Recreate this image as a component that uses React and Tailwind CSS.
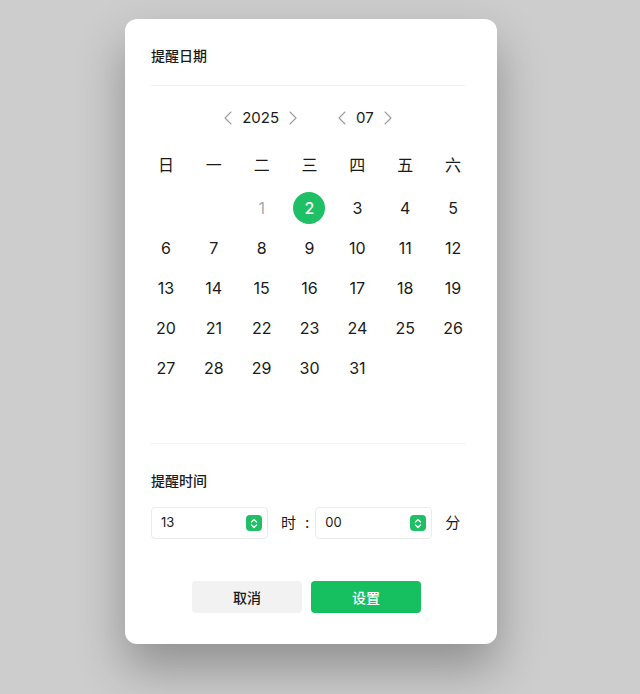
const weekdays = ["日", "一", "二", "三", "四", "五", "六"];

// 2025年7月 从周二开始
const days = [null, null, 1, 2, 3, 4, 5];
for (let d = 6; d <= 31; d++) days.push(d);

function Chevron({ dir }) {
  return (
    <svg width="8" height="14" viewBox="0 0 8 14" fill="none">
      <path
        d={dir === "left" ? "M7 1 L1 7 L7 13" : "M1 1 L7 7 L1 13"}
        stroke="#9c9c9c"
        strokeWidth="1.1"
        strokeLinecap="round"
        strokeLinejoin="round"
      />
    </svg>
  );
}

function Spinner() {
  return (
    <span className="flex h-4 w-4 items-center justify-center rounded-[4px] bg-[#1fbf66]">
      <svg width="8" height="11" viewBox="0 0 8 11" fill="none">
        <path d="M1.5 4 L4 1.5 L6.5 4" stroke="white" strokeWidth="1.3" strokeLinecap="round" strokeLinejoin="round" />
        <path d="M1.5 7 L4 9.5 L6.5 7" stroke="white" strokeWidth="1.3" strokeLinecap="round" strokeLinejoin="round" />
      </svg>
    </span>
  );
}

function TimeBox({ value }) {
  return (
    <div className="flex h-[32px] w-[117px] items-center justify-between rounded-[4px] border border-[#ebebeb] pl-[9px] pr-[5px] text-[13px] text-[#1a1a1a]">
      <span>{value}</span>
      <Spinner />
    </div>
  );
}

export default function App() {
  return (
    <div
      className="min-h-[694px] w-full bg-[#cdcdcd] pl-[125px] pt-[19px]"
      style={{ fontFamily: 'Inter, "Noto Sans CJK SC", sans-serif' }}
    >
      <div className="w-[372px] rounded-[12px] bg-white pb-[31px] pl-[26px] pr-[32px] pt-[27px] shadow-[0_24px_48px_rgba(0,0,0,0.3)]">
        {/* 提醒日期 */}
        <h2 className="text-[14px] font-medium leading-[20px] text-[#1a1a1a]">提醒日期</h2>
        <div className="mt-[19px] h-px bg-[#f0f0f0]" />

        <div className="mt-[21px] flex items-center justify-center gap-[41px] text-[15px] leading-[22px] text-[#1a1a1a]">
          <div className="flex items-center gap-[10px]">
            <Chevron dir="left" />
            <span>2025</span>
            <Chevron dir="right" />
          </div>
          <div className="flex items-center gap-[10px]">
            <Chevron dir="left" />
            <span>07</span>
            <Chevron dir="right" />
          </div>
        </div>

        <div className="-ml-[9px] mt-[16px] w-[335px]">
          <div className="grid grid-cols-7">
            {weekdays.map((w) => (
              <div key={w} className="flex h-10 items-center justify-center text-[16px] text-[#1a1a1a]">
                {w}
              </div>
            ))}
          </div>
          <div className="mt-[3px] grid grid-cols-7">
            {days.map((d, i) => (
              <div key={i} className="flex h-10 items-center justify-center text-[16px]">
                {d === 2 ? (
                  <span className="flex h-[32px] w-[32px] items-center justify-center rounded-full bg-[#1fbf66] font-medium text-white">
                    2
                  </span>
                ) : d === 1 ? (
                  <span className="text-[#a8a8a8]">1</span>
                ) : (
                  <span className="text-[#1a1a1a]">{d}</span>
                )}
              </div>
            ))}
          </div>
        </div>

        <div className="mt-[55px] h-px bg-[#f3f3f3]" />

        {/* 提醒时间 */}
        <h2 className="mt-[27px] text-[14px] font-medium leading-[20px] text-[#1a1a1a]">提醒时间</h2>
        <div className="mt-[16px] flex items-center text-[15px] text-[#1a1a1a]">
          <TimeBox value="13" />
          <span className="ml-[13px]">时</span>
          <span className="ml-[9px]">:</span>
          <span className="ml-[6px]">
            <TimeBox value="00" />
          </span>
          <span className="ml-[13px]">分</span>
        </div>

        <div className="mt-[42px] flex justify-center gap-[9px] pr-[3px]">
          <button className="h-[32px] w-[110px] rounded-[4px] bg-[#f2f2f2] text-[14px] font-medium text-[#1a1a1a]">
            取消
          </button>
          <button className="h-[32px] w-[110px] rounded-[4px] bg-[#16c060] text-[14px] font-medium text-white">
            设置
          </button>
        </div>
      </div>
    </div>
  );
}
